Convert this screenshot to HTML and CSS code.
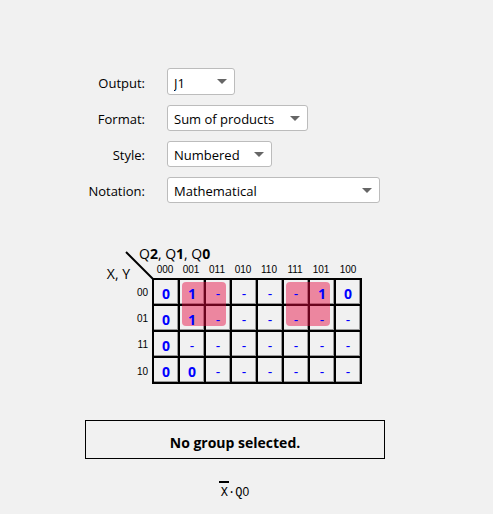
FILE: index.html
```html
<!DOCTYPE html>
<html lang="en">
<head>
<meta charset="utf-8">
<title>Karnaugh map</title>
<link rel="stylesheet" href="styles.css">
</head>
<body>
<main class="panel">
  <form class="options">
    <label for="output">Output:</label>
    <span class="picker picker-output"><select id="output"><option>J1</option></select></span>
    <label for="format">Format:</label>
    <span class="picker picker-format"><select id="format"><option>Sum of products</option></select></span>
    <label for="style">Style:</label>
    <span class="picker picker-style"><select id="style"><option>Numbered</option></select></span>
    <label for="notation">Notation:</label>
    <span class="picker picker-notation"><select id="notation"><option>Mathematical</option></select></span>
  </form>
  <section class="kmap">
    <table>
      <caption>Q<b>2</b>, Q<b>1</b>, Q<b>0</b></caption>
      <thead>
        <tr><th class="rows-label">X, Y</th><th>000</th><th>001</th><th>011</th><th>010</th><th>110</th><th>111</th><th>101</th><th>100</th></tr>
      </thead>
      <tbody>
        <tr><th>00</th><td><b>0</b></td><td><b>1</b></td><td><span>-</span></td><td><span>-</span></td><td><span>-</span></td><td><span>-</span></td><td><b>1</b></td><td><b>0</b></td></tr>
        <tr><th>01</th><td><b>0</b></td><td><b>1</b></td><td><span>-</span></td><td><span>-</span></td><td><span>-</span></td><td><span>-</span></td><td><span>-</span></td><td><span>-</span></td></tr>
        <tr><th>11</th><td><b>0</b></td><td><span>-</span></td><td><span>-</span></td><td><span>-</span></td><td><span>-</span></td><td><span>-</span></td><td><span>-</span></td><td><span>-</span></td></tr>
        <tr><th>10</th><td><b>0</b></td><td><b>0</b></td><td><span>-</span></td><td><span>-</span></td><td><span>-</span></td><td><span>-</span></td><td><span>-</span></td><td><span>-</span></td></tr>
      </tbody>
    </table>
    <svg class="diagonal" width="30" height="30" viewBox="0 0 30 30" aria-hidden="true"><path d="M1 1 28 28" stroke="#000" stroke-width="2"/></svg>
    <div class="group group-left"></div>
    <div class="group group-right"></div>
  </section>
  <p class="status">No group selected.</p>
  <p class="formula"><span class="negated">X</span>·Q<span class="digit">0</span></p>
</main>
</body>
</html>
```
FILE: styles.css
```css
* {
  box-sizing: border-box;
}

body {
  margin: 0;
  padding: 68px 23px 0 0;
  background: #f1f1f1;
  color: #000;
  font: 14px/20px "Open Sans", "Noto Sans", sans-serif;
}

.panel {
  max-width: 300px;
  margin: 0 auto;
}

.options {
  display: grid;
  grid-template-columns: 60px 1fr;
  gap: 10px 22px;
  align-items: center;
  font-size: 13px;
}

.options label {
  padding-top: 2px;
  text-align: right;
  white-space: nowrap;
}

.picker {
  position: relative;
  display: block;
  height: 26px;
}

.picker-output {
  width: 68px;
  height: 27px;
}

.picker-format {
  width: 141px;
}

.picker-style {
  width: 105px;
}

.picker-notation {
  width: 213px;
}

.picker select {
  appearance: none;
  display: block;
  width: 100%;
  height: 100%;
  padding: 2px 6px 0;
  border: 1px solid #bcbcbc;
  border-radius: 3px;
  background: #fff;
  color: #000;
  font: inherit;
}

.picker::after {
  content: "";
  position: absolute;
  top: 11px;
  right: 8px;
  border: 5px solid transparent;
  border-top-color: #666;
  border-bottom: 0;
  pointer-events: none;
}

.kmap {
  position: relative;
  margin-top: 41px;
}

table {
  border-spacing: 0;
  table-layout: fixed;
  width: 277px;
}

caption {
  height: 18px;
  padding-left: 54px;
  text-align: left;
  line-height: 20px;
}

th,
td {
  width: 26px;
  height: 26px;
  padding: 0;
  text-align: center;
}

th {
  font: 10px/12px "Liberation Sans", sans-serif;
}

thead th {
  height: 16px;
  padding: 0 0 2px;
  vertical-align: bottom;
}

tbody th {
  padding: 4px 4px 0 0;
  text-align: right;
}

thead .rows-label {
  width: 67px;
  padding: 0 22px 0 0;
  font: 14px/8px "Open Sans", "Noto Sans", sans-serif;
  text-align: right;
  vertical-align: bottom;
}

thead th:last-child,
td:last-child {
  width: 28px;
}

td {
  padding-top: 3px;
  border: 2px solid #000;
  border-width: 2px 0 0 2px;
  box-shadow: inset -1px -1px 0 #999;
  color: #00f;
  line-height: 20px;
}

td b,
td span {
  position: relative;
  z-index: 1;
}

td:last-child {
  border-right-width: 2px;
}

tr:last-child td {
  height: 28px;
  border-bottom-width: 2px;
}

.diagonal {
  position: absolute;
  left: 40px;
  top: 7px;
}

.group {
  position: absolute;
  top: 38px;
  width: 44px;
  height: 44px;
  border-radius: 4px;
  background: rgba(232, 8, 64, 0.46);
}

.group-left {
  left: 97px;
}

.group-right {
  left: 201px;
}

.status {
  margin: 36px 0 0;
  padding: 12px 0 5px;
  border: 1px solid #000;
  font-weight: bold;
  text-align: center;
}

.formula {
  margin: 23px 0 0;
  font: 12px/20px "Liberation Mono", monospace;
  text-align: center;
}

.negated {
  margin: 0 -1px 0 -2px;
  padding: 3px 1px 0 2px;
  border-top: 2px solid #000;
}

.digit {
  font-family: "Liberation Sans", sans-serif;
}
```
